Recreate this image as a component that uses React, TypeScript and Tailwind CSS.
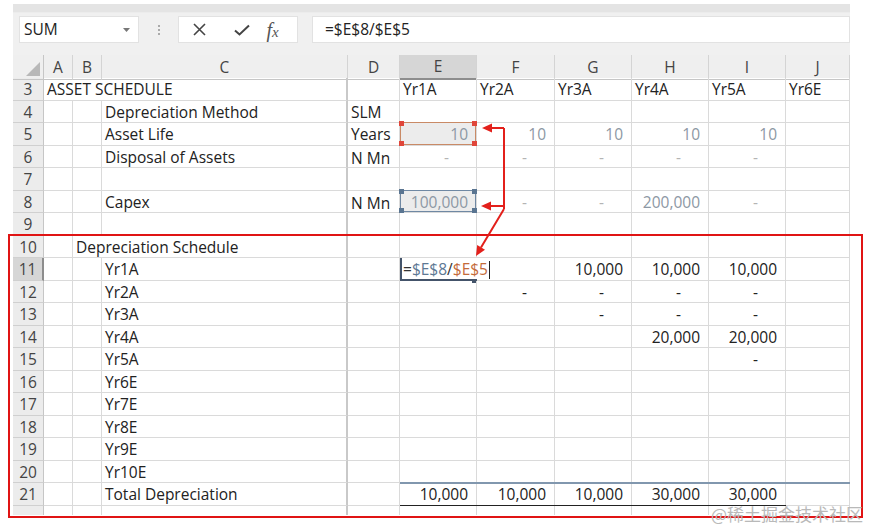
import React from 'react';

type Cell = {
  t?: React.ReactNode;
  a?: 'l' | 'r' | 'd' | 'c';
  c?: string;
  nr?: boolean;
  box?: 'ref5' | 'ref8' | 'edit';
  line?: 'total' | 'top';
};

const colWidths = 'grid-cols-[31px_29px_29px_246px_52px_77px_78px_77px_77px_77px_64px]';
const letters = ['A', 'B', 'C', 'D', 'E', 'F', 'G', 'H', 'I', 'J'];

const gray = 'text-[#8d98a4]';
const dashGray = 'text-[#b4b4b4]';

const rows: { n: number; cells: Record<string, Cell> }[] = [
  {
    n: 3,
    cells: {
      A: { t: 'ASSET SCHEDULE', nr: true },
      B: { nr: true },
      E: { t: 'Yr1A' },
      F: { t: 'Yr2A' },
      G: { t: 'Yr3A' },
      H: { t: 'Yr4A' },
      I: { t: 'Yr5A' },
      J: { t: 'Yr6E' },
    },
  },
  { n: 4, cells: { C: { t: 'Depreciation Method' }, D: { t: 'SLM' } } },
  {
    n: 5,
    cells: {
      C: { t: 'Asset Life' },
      D: { t: 'Years' },
      E: { t: '10', a: 'r', c: gray, box: 'ref5' },
      F: { t: '10', a: 'r', c: gray },
      G: { t: '10', a: 'r', c: gray },
      H: { t: '10', a: 'r', c: gray },
      I: { t: '10', a: 'r', c: gray },
    },
  },
  {
    n: 6,
    cells: {
      C: { t: 'Disposal of Assets' },
      D: { t: 'N Mn', c: 'pt-[5px]' },
      E: { t: '-', a: 'd', c: dashGray },
      F: { t: '-', a: 'd', c: dashGray },
      G: { t: '-', a: 'd', c: dashGray },
      H: { t: '-', a: 'd', c: dashGray },
      I: { t: '-', a: 'd', c: dashGray },
    },
  },
  { n: 7, cells: {} },
  {
    n: 8,
    cells: {
      C: { t: 'Capex' },
      D: { t: 'N Mn', c: 'pt-[4px]' },
      E: { t: '100,000', a: 'r', c: gray, box: 'ref8' },
      F: { t: '-', a: 'd', c: dashGray },
      G: { t: '-', a: 'd', c: dashGray },
      H: { t: '200,000', a: 'r', c: gray },
      I: { t: '-', a: 'd', c: dashGray },
    },
  },
  { n: 9, cells: {} },
  { n: 10, cells: { B: { t: 'Depreciation Schedule', nr: true } } },
  {
    n: 11,
    cells: {
      C: { t: 'Yr1A' },
      E: {
        t: (
          <span className="flex items-center">
            <span className="text-[#333]">=</span>
            <span className="text-[#5d7894]">$E$8</span>
            <span className="text-[#333]">/</span>
            <span className="text-[#c46a3a]">$E$5</span>
            <span className="ml-[1px] h-[18px] w-[1px] bg-[#222]" />
          </span>
        ),
        box: 'edit',
        nr: true,
      },
      G: { t: '10,000', a: 'r' },
      H: { t: '10,000', a: 'r' },
      I: { t: '10,000', a: 'r' },
    },
  },
  {
    n: 12,
    cells: {
      C: { t: 'Yr2A' },
      F: { t: '-', a: 'd' },
      G: { t: '-', a: 'd' },
      H: { t: '-', a: 'd' },
      I: { t: '-', a: 'd' },
    },
  },
  {
    n: 13,
    cells: {
      C: { t: 'Yr3A' },
      G: { t: '-', a: 'd' },
      H: { t: '-', a: 'd' },
      I: { t: '-', a: 'd' },
    },
  },
  { n: 14, cells: { C: { t: 'Yr4A' }, H: { t: '20,000', a: 'r' }, I: { t: '20,000', a: 'r' } } },
  { n: 15, cells: { C: { t: 'Yr5A' }, I: { t: '-', a: 'd' } } },
  { n: 16, cells: { C: { t: 'Yr6E' } } },
  { n: 17, cells: { C: { t: 'Yr7E' } } },
  { n: 18, cells: { C: { t: 'Yr8E' } } },
  { n: 19, cells: { C: { t: 'Yr9E' } } },
  { n: 20, cells: { C: { t: 'Yr10E' } } },
  {
    n: 21,
    cells: {
      C: { t: 'Total Depreciation' },
      E: { t: '10,000', a: 'r', line: 'total' },
      F: { t: '10,000', a: 'r', line: 'total' },
      G: { t: '10,000', a: 'r', line: 'total' },
      H: { t: '30,000', a: 'r', line: 'total' },
      I: { t: '30,000', a: 'r', line: 'total' },
      J: { line: 'top' },
    },
  },
  { n: 22, cells: {} },
];

function Corners({ color }: { color: string }) {
  const sq = `absolute w-[5px] h-[5px] ${color}`;
  return (
    <>
      <span className={`${sq} -left-[2px] -top-[2px]`} />
      <span className={`${sq} -right-[2px] -top-[2px]`} />
      <span className={`${sq} -left-[2px] -bottom-[2px]`} />
      <span className={`${sq} -right-[2px] -bottom-[2px]`} />
    </>
  );
}

function GridCell({ cell, col }: { cell?: Cell; col: string }) {
  const a = cell?.a ?? 'l';
  const color = cell?.c?.startsWith('text-') ? cell.c : 'text-[#222]';
  const pad = cell?.c && !cell.c.startsWith('text-') ? cell.c : 'pt-[2px]';
  const right =
    cell?.nr ? 'border-r-transparent' : col === 'C' ? 'border-r-2 border-r-[#c9c9c9]' : 'border-r border-r-[#dadada]';
  const justify =
    a === 'r' ? 'justify-end pr-[8px]' : a === 'd' ? 'justify-end pr-[27px]' : a === 'c' ? 'justify-center' : 'justify-start pl-[3px]';
  return (
    <div
      className={`relative h-[22.5px] border-b border-b-[#dadada] ${right} flex items-center whitespace-nowrap ${justify} ${pad}`}
    >
      {cell?.box === 'ref5' && (
        <div className="absolute inset-0 -top-[1px] bg-[#ececec] border-[1.5px] border-[#c98a66]">
          <Corners color="bg-[#e0463a]" />
        </div>
      )}
      {cell?.box === 'ref8' && (
        <div className="absolute inset-0 -top-[1px] bg-[#ececec] border-[1.5px] border-[#6f88a3]">
          <Corners color="bg-[#5a7591]" />
        </div>
      )}
      {cell?.box === 'edit' && (
        <>
          <div className="absolute left-0 top-0 bottom-0 w-[2px] bg-[#44546a]" />
          <div className="absolute left-0 right-[2px] -bottom-[1px] h-[2px] bg-[#44546a]" />
          <div className="absolute right-[0px] -bottom-[3px] w-[5px] h-[4px] bg-[#44546a]" />
        </>
      )}
      {cell?.line && <div className="absolute left-0 -right-[1px] -top-[1px] h-[2px] bg-[#8197ae]" />}
      {cell?.line === 'total' && <div className="absolute left-0 -right-[1px] -bottom-[1px] h-[1px] bg-[#222]" />}
      <span className={`relative z-10 leading-none ${color}`}>{cell?.t}</span>
    </div>
  );
}

function FormulaBar() {
  return (
    <div className="bg-[#f0f0f0]">
      <div className="h-[9px] bg-[#e4e4e4] border-b border-[#ececec]" />
      <div className="h-[42px] flex items-start pt-[3px] pl-[6px]">
        <div className="w-[120px] h-[27px] bg-white border border-[#e2e2e2] flex items-center justify-between pl-[4px] pr-[8px]">
          <span className="text-[15.5px] text-[#222]">SUM</span>
          <svg width="7" height="4" viewBox="0 0 7 4">
            <polygon points="0,0 7,0 3.5,4" fill="#777" />
          </svg>
        </div>
        <div className="w-[39px] h-[27px] flex flex-col items-center justify-center gap-[2px]">
          <span className="w-[2px] h-[2px] bg-[#aaa]" />
          <span className="w-[2px] h-[2px] bg-[#aaa]" />
          <span className="w-[2px] h-[2px] bg-[#aaa]" />
        </div>
        <div className="w-[120px] h-[27px] bg-white border border-[#e2e2e2] flex items-center">
          <div className="w-[42px] flex justify-center">
            <svg width="13" height="13" viewBox="0 0 13 13">
              <path d="M1 1L12 12M12 1L1 12" stroke="#444" strokeWidth="1.6" />
            </svg>
          </div>
          <div className="w-[44px] flex justify-center">
            <svg width="16" height="12" viewBox="0 0 16 12">
              <path d="M1 6.5L5.5 10.5L15 1.5" stroke="#444" strokeWidth="2" fill="none" />
            </svg>
          </div>
          <div className="w-[34px] flex justify-start pl-[3px]">
            <span className="font-['Liberation_Serif',serif] italic text-[20px] text-[#555] leading-none">
              f<span className="text-[15px]">x</span>
            </span>
          </div>
        </div>
        <div className="ml-[14px] flex-1 h-[27px] bg-white border border-[#e2e2e2] flex items-center pl-[12px]">
          <span className="text-[15.5px] text-[#222]">=$E$8/$E$5</span>
        </div>
      </div>
    </div>
  );
}

export default function App() {
  return (
    <div className="relative w-[870px] h-[525px] bg-white overflow-hidden font-['Open_Sans',sans-serif] text-[15.5px]">
      <div className="ml-[13px] mt-[4px] w-[837px] h-[511px] overflow-hidden">
        <FormulaBar />
        {/* column headers */}
        <div className={`grid ${colWidths} h-[23px] bg-[#efefef] text-[#444]`}>
          <div className="relative border-r border-b border-[#c6c6c6] flex items-end justify-end pr-[3px] pb-[3px]">
            <svg width="14" height="14" viewBox="0 0 14 14">
              <polygon points="14,0 14,14 0,14" fill="#b8b8b8" />
            </svg>
          </div>
          {letters.map(l => (
            <div
              key={l}
              className={`flex items-center justify-center border-r border-[#d4d4d4] ${
                l === 'E' ? 'bg-[#d6d6d6] border-b-2 border-b-[#8d8d8d]' : 'border-b border-b-[#c6c6c6]'
              }`}
            >
              {l}
            </div>
          ))}
        </div>
        {/* rows */}
        {rows.map(r => (
          <div key={r.n} className={`grid ${colWidths}`}>
            <div
              className={`h-[22.5px] flex items-center justify-center pt-[2px] text-[#444] border-b border-[#d0d0d0] ${
                r.n === 11 ? 'bg-[#d6d6d6] border-r-2 border-r-[#8d8d8d]' : 'bg-[#ececec] border-r border-r-[#c6c6c6]'
              }`}
            >
              {r.n < 22 ? r.n : ''}
            </div>
            {letters.map(l => (
              <GridCell key={l} col={l} cell={r.cells[l]} />
            ))}
          </div>
        ))}
      </div>

      {/* highlight box */}
      <div className="absolute left-[8px] top-[234px] w-[855px] h-[284px] border-2 border-[#e01414] pointer-events-none" />

      {/* arrows */}
      <svg className="absolute inset-0 pointer-events-none" width="870" height="525" viewBox="0 0 870 525">
        <g stroke="#e3201b" strokeWidth="2" fill="none">
          <path d="M504 128 H490 M504 128 V209 M504 206 H489 M504 209 L481 247.5" />
        </g>
        <g fill="#e3201b">
          <polygon points="482,128 492,123.5 492,132.5" />
          <polygon points="481,206 491,201.5 491,210.5" />
          <polygon points="476,256 485,249.7 477.2,245.1" />
        </g>
      </svg>

      <div className="absolute right-[7px] bottom-[3px] text-[17px] leading-none text-[#b9b9b9] font-['Noto_Sans_CJK_SC',sans-serif]">
        @稀土掘金技术社区
      </div>
    </div>
  );
}
